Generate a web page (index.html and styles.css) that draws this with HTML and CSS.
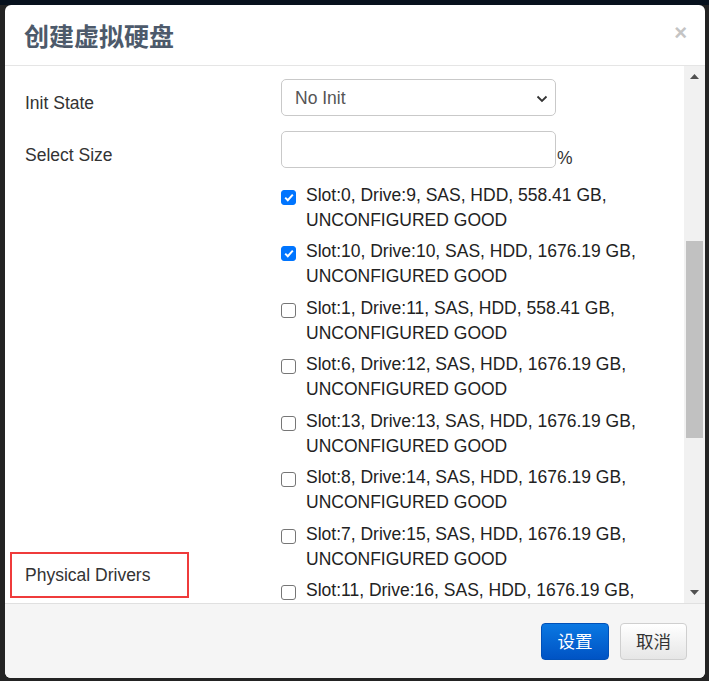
FILE: index.html
```html
<!DOCTYPE html>
<html lang="zh">
<head>
<meta charset="utf-8">
<title>创建虚拟硬盘</title>
<link rel="stylesheet" href="styles.css">
</head>
<body>
<div class="modal">
  <div class="modal-header">
    <h4 class="modal-title">创建虚拟硬盘</h4>
    <span class="close">×</span>
  </div>
  <div class="modal-body">
    <div class="scroll-content">
      <div class="form-row">
        <label class="control-label">Init State</label>
        <div class="control">
          <div class="select">
            <span>No Init</span>
            <svg class="chev" width="12" height="8" viewBox="0 0 12 8"><path d="M1.5 1.5 L6 6 L10.5 1.5" fill="none" stroke="#333" stroke-width="1.8"/></svg>
          </div>
        </div>
      </div>
      <div class="form-row">
        <label class="control-label">Select Size</label>
        <div class="control size-control">
          <div class="input"></div>
          <span class="pct">%</span>
        </div>
      </div>
      <div class="form-row drivers-row">
        <label class="control-label drivers-label">Physical Drivers</label>
        <div class="checklist">
          <label class="check"><span class="box checked"><svg width="10" height="9" viewBox="0 0 10 9"><path d="M1.2 4.6 L3.8 7.2 L8.8 1.6" fill="none" stroke="#fff" stroke-width="2"/></svg></span><span class="txt">Slot:0, Drive:9, SAS, HDD, 558.41 GB, UNCONFIGURED GOOD</span></label>
          <label class="check"><span class="box checked"><svg width="10" height="9" viewBox="0 0 10 9"><path d="M1.2 4.6 L3.8 7.2 L8.8 1.6" fill="none" stroke="#fff" stroke-width="2"/></svg></span><span class="txt">Slot:10, Drive:10, SAS, HDD, 1676.19 GB, UNCONFIGURED GOOD</span></label>
          <label class="check"><span class="box"></span><span class="txt">Slot:1, Drive:11, SAS, HDD, 558.41 GB, UNCONFIGURED GOOD</span></label>
          <label class="check"><span class="box"></span><span class="txt">Slot:6, Drive:12, SAS, HDD, 1676.19 GB, UNCONFIGURED GOOD</span></label>
          <label class="check"><span class="box"></span><span class="txt">Slot:13, Drive:13, SAS, HDD, 1676.19 GB, UNCONFIGURED GOOD</span></label>
          <label class="check"><span class="box"></span><span class="txt">Slot:8, Drive:14, SAS, HDD, 1676.19 GB, UNCONFIGURED GOOD</span></label>
          <label class="check"><span class="box"></span><span class="txt">Slot:7, Drive:15, SAS, HDD, 1676.19 GB, UNCONFIGURED GOOD</span></label>
          <label class="check"><span class="box"></span><span class="txt">Slot:11, Drive:16, SAS, HDD, 1676.19 GB, UNCONFIGURED GOOD</span></label>
          <label class="check"><span class="box"></span><span class="txt">Slot:12, Drive:17, SAS, HDD, 1676.19 GB, UNCONFIGURED GOOD</span></label>
          <label class="check"><span class="box"></span><span class="txt">Slot:2, Drive:18, SAS, HDD, 558.41 GB, UNCONFIGURED GOOD</span></label>
          <label class="check"><span class="box"></span><span class="txt">Slot:3, Drive:19, SAS, HDD, 558.41 GB, UNCONFIGURED GOOD</span></label>
          <label class="check"><span class="box"></span><span class="txt">Slot:4, Drive:20, SAS, HDD, 1676.19 GB, UNCONFIGURED GOOD</span></label>
          <label class="check"><span class="box"></span><span class="txt">Slot:5, Drive:21, SAS, HDD, 1676.19 GB, UNCONFIGURED GOOD</span></label>
          <label class="check"><span class="box"></span><span class="txt">Slot:9, Drive:22, SAS, HDD, 1676.19 GB, UNCONFIGURED GOOD</span></label>
        </div>
      </div>
    </div>
    <div class="scrollbar">
      <div class="arrow"><svg width="9" height="5" viewBox="0 0 9 5"><path d="M0 5 L4.5 0 L9 5 Z" fill="#505050"/></svg></div>
      <div class="track"><div class="thumb"></div></div>
      <div class="arrow"><svg width="9" height="5" viewBox="0 0 9 5"><path d="M0 0 L4.5 5 L9 0 Z" fill="#505050"/></svg></div>
    </div>
  </div>
  <div class="modal-footer">
    <button class="btn btn-primary">设置</button>
    <button class="btn btn-default">取消</button>
  </div>
</div>
</body>
</html>
```

FILE: styles.css
```css
* { box-sizing: border-box; }
html, body { margin: 0; height: 100%; }
body {
  background: linear-gradient(#07111d 0, #07111d 5px, #232323 5px);
  padding: 5px 4px 3px 5px;
  font-family: "Liberation Sans", Arial, "Noto Sans CJK SC", sans-serif;
  font-size: 17.5px;
  color: #333;
  overflow: hidden;
}
.modal {
  width: 700px;
  height: 673px;
  background: #fff;
  border-radius: 6px;
  display: flex;
  flex-direction: column;
  overflow: hidden;
}
.modal-header {
  height: 61px;
  flex: none;
  border-bottom: 1px solid #e5e5e5;
  display: flex;
  align-items: center;
  justify-content: space-between;
  padding: 0 18px 0 19px;
}
.modal-title {
  margin: 0;
  font-family: "Noto Sans CJK SC", sans-serif;
  font-weight: 700;
  font-size: 25px;
  color: #4d5a6b;
  line-height: 1;
}
.close {
  font-family: "Liberation Sans", Arial, sans-serif;
  font-weight: 700;
  font-size: 22px;
  color: #c4c4c4;
  line-height: 1;
  margin-top: -4px;
}
.modal-body {
  flex: 1;
  display: flex;
  min-height: 0;
}
.scroll-content {
  flex: 1;
  overflow: hidden;
  padding: 13px 0 0 20px;
}
.form-row {
  display: grid;
  grid-template-columns: 256px 1fr;
  margin-bottom: 15px;
  line-height: 25px;
}
.control-label {
  padding-top: 12px;
  color: #333;
}
.select {
  width: 275px;
  height: 37px;
  border: 1px solid #c9c9c9;
  border-radius: 5px;
  display: flex;
  align-items: center;
  justify-content: space-between;
  padding: 1px 7px 0 13px;
  color: #555;
}
.chev { margin-top: 1px; }
.size-control { display: flex; align-items: flex-end; }
.input {
  width: 275px;
  height: 37px;
  border: 1px solid #c9c9c9;
  border-radius: 5px;
}
.pct { line-height: 20px; margin-left: 1px; color: #333; }
.drivers-label {
  align-self: center;
  justify-self: start;
  width: 179px;
  height: 46px;
  margin-left: -15px;
  padding: 9px 0 0 13px;
  border: 2px solid #ef3b3b;
}
.checklist {
  display: flex;
  flex-direction: column;
  gap: 6.43px;
}
.check {
  display: flex;
  align-items: flex-start;
  width: 360px;
}
.box {
  flex: none;
  width: 15px;
  height: 15px;
  margin-top: 7px;
  margin-right: 10px;
  border: 1.5px solid #767676;
  border-radius: 3px;
  background: #fff;
  display: flex;
  align-items: center;
  justify-content: center;
}
.box.checked {
  background: #0075ff;
  border-color: #0075ff;
}
.txt { color: #222; }
.scrollbar {
  flex: none;
  width: 21px;
  background: #f1f1f1;
  display: flex;
  flex-direction: column;
}
.arrow {
  height: 21px;
  display: flex;
  align-items: center;
  justify-content: center;
}
.track {
  flex: 1;
  padding: 0 2px;
  padding-top: 154px;
}
.thumb {
  height: 197px;
  background: #c1c1c1;
}
.modal-footer {
  height: 75px;
  flex: none;
  background: #f5f5f5;
  border-top: 1px solid #e0e0e0;
  display: flex;
  align-items: center;
  justify-content: flex-end;
  gap: 11px;
  padding: 0 18px 0 0;
}
.btn {
  font-family: "Noto Sans CJK SC", sans-serif;
  font-size: 17.5px;
  height: 37px;
  padding: 0;
  white-space: nowrap;
  border-radius: 4px;
  line-height: 1;
  cursor: pointer;
}
.btn-primary {
  width: 68px;
  color: #fff;
  background: linear-gradient(#0a78e2, #0053c4);
  border: 1px solid #0050b8;
}
.btn-default {
  width: 67px;
  color: #333;
  background: linear-gradient(#ffffff, #e6e6e6);
  border: 1px solid #cfcfcf;
}
```
